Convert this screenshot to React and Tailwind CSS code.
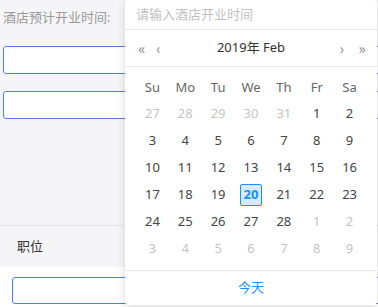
const font = { fontFamily: '"Noto Sans", "Noto Sans CJK SC", sans-serif' };

const weeks = [
  [[27, 0], [28, 0], [29, 0], [30, 0], [31, 0], [1, 1], [2, 1]],
  [[3, 1], [4, 1], [5, 1], [6, 1], [7, 1], [8, 1], [9, 1]],
  [[10, 1], [11, 1], [12, 1], [13, 1], [14, 1], [15, 1], [16, 1]],
  [[17, 1], [18, 1], [19, 1], [20, 2], [21, 1], [22, 1], [23, 1]],
  [[24, 1], [25, 1], [26, 1], [27, 1], [28, 1], [1, 0], [2, 0]],
  [[3, 0], [4, 0], [5, 0], [6, 0], [7, 0], [8, 0], [9, 0]],
];

function Calendar() {
  return (
    <div className="absolute left-[125px] top-0 w-[252px] h-[305px] bg-white rounded-[4px] shadow-[0_2px_8px_rgba(0,0,0,0.15)] flex flex-col">
      <div className="h-[30px] flex items-center px-[11px] text-[13px] text-[#bfbfbf] border-b border-[#e8e8e8]">
        请输入酒店开业时间
      </div>
      <div className="h-[36px] flex items-center pl-[13px] pr-[11px] text-[#999]">
        <span className="w-[18px] text-[14px]">«</span>
        <span className="w-[20px] text-[14px]">‹</span>
        <span className="flex-1 text-center text-[13px] text-[#333]">2019年 Feb</span>
        <span className="w-[20px] text-right text-[14px] pr-[2px]">›</span>
        <span className="w-[20px] text-right text-[14px]">»</span>
      </div>
      <div className="px-[11px] pt-[9px] flex-1 border-t border-[#e8e8e8]">
        <div className="grid grid-cols-7 h-[24px] items-center text-[13px] text-[#666]">
          {["Su", "Mo", "Tu", "We", "Th", "Fr", "Sa"].map((d) => (
            <div key={d} className="text-center">{d}</div>
          ))}
        </div>
        {weeks.map((w, i) => (
          <div key={i} className="grid grid-cols-7 h-[27px] items-center text-[13px]">
            {w.map(([n, t], j) => (
              <div key={j} className="flex justify-center">
                {t === 2 ? (
                  <span className="w-[22px] h-[22px] flex items-center justify-center rounded-[2px] border border-[#1890ff] bg-[#d6ebff] text-[#1890ff] font-bold">
                    {n}
                  </span>
                ) : (
                  <span className={t ? "text-[#444]" : "text-[#c4c4c4]"}>{n}</span>
                )}
              </div>
            ))}
          </div>
        ))}
      </div>
      <div className="h-[35px] flex items-center justify-center border-t border-[#e8e8e8] text-[13px] text-[#1890ff]">
        今天
      </div>
    </div>
  );
}

export default function App() {
  return (
    <div className="relative w-[378px] h-[307px] overflow-hidden bg-[#f5f5f7]" style={font}>
      <div className="pl-[3px] pt-[8px] h-[36px] text-[13px] text-[#999]">酒店预计开业时间:</div>
      <div className="ml-[3px] mt-[10px] w-[400px] h-[28px] bg-white border border-[#4d7cf4] rounded-[3px]" />
      <div className="ml-[3px] mt-[17px] w-[400px] h-[28px] bg-white border border-[#4d7cf4] rounded-[3px]" />
      <div className="h-[107px] border-b border-[#e5e5e5]" />
      <div className="h-[41px] flex items-center pl-[17px] text-[13px] text-[#333]">职位</div>
      <div className="bg-white h-[40px] pt-[10px] pl-[12px]">
        <div className="w-[400px] h-[27px] border border-[#4d7cf4] rounded-[3px]" />
      </div>
      <Calendar />
    </div>
  );
}
